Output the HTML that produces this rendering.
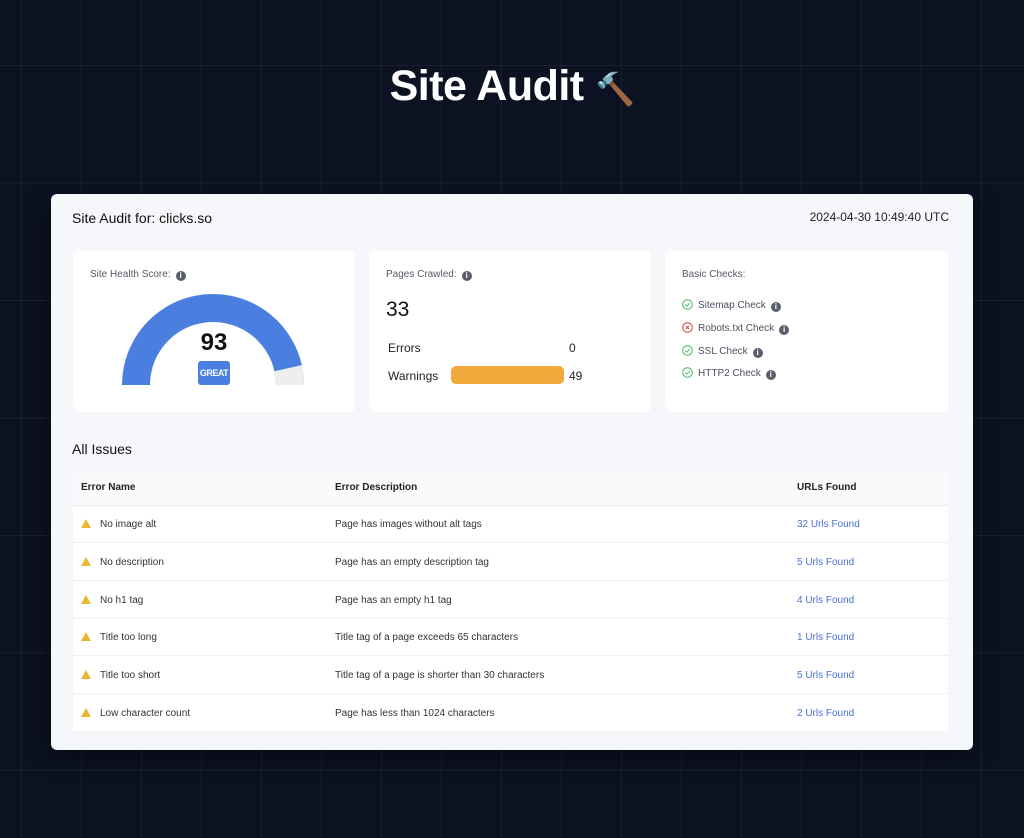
<!DOCTYPE html>
<html><head><meta charset="utf-8"><style>
*{margin:0;padding:0;box-sizing:border-box}
body{width:1024px;height:838px;overflow:hidden;background:#0c1222;font-family:"Liberation Sans",sans-serif;position:relative}
.grid{position:absolute;inset:0;background-image:linear-gradient(90deg,rgba(255,255,255,0.05) 1px,transparent 1px),linear-gradient(0deg,rgba(255,255,255,0.06) 1px,transparent 1px);background-size:60px 100%,100% 117.5px;background-position:21px 0,0 66px}
h1{position:absolute;left:0;width:1024px;top:62px;text-align:center;color:#fff;font-size:43px;font-weight:700;letter-spacing:-0.5px}
.card{position:absolute;left:51px;top:194px;width:922px;height:556px;background:#f5f7fa;border-radius:6px;box-shadow:0 6px 20px rgba(0,0,0,0.5)}
.abs{position:absolute}
.box{position:absolute;top:57px;height:161px;background:#fff;border-radius:6px}
.lbl{font-size:10px;color:#555a64}
.i{display:inline-block;width:10px;height:10px;border-radius:50%;background:#5b5f6b;color:#fff;font-size:8px;font-weight:700;text-align:center;line-height:10px;vertical-align:-1px;margin-left:5px}
.chk{position:absolute;left:17px;font-size:10px;color:#4b5060}
.chk svg{vertical-align:-2px;margin-right:5px}
table{position:absolute;left:22px;top:277px;width:875px;border-collapse:collapse;font-size:10px;color:#333}
th{background:#f9fafb;height:34px;text-align:left;font-weight:700;color:#222;padding-left:8px;border-bottom:1px solid #e6e8ec}
td{background:#fff;height:37.7px;padding-left:8px;padding-top:2px;border-bottom:1px solid #eef0f3}
td a{color:#4a6fd6;text-decoration:none}
.w{display:inline-block;width:0;height:0;border-left:5px solid transparent;border-right:5px solid transparent;border-bottom:9px solid #eab834;vertical-align:-1px;margin-right:9px}
</style></head><body>
<div class="grid"></div>
<h1>Site Audit <span style="font-size:32px">🔨</span></h1>
<div class="card">
 <div class="abs" style="left:21px;top:16px;font-size:14px;color:#111">Site Audit for: clicks.so</div>
 <div class="abs" style="right:24px;top:16px;font-size:12px;color:#222">2024-04-30 10:49:40 UTC</div>

 <div class="box" style="left:22px;width:282px">
  <div class="abs lbl" style="left:17px;top:18px">Site Health Score:<span class="i">i</span></div>
  <svg class="abs" style="left:0;top:0" width="282" height="161">
   <path d="M49 134 A91 91 0 0 1 231 134 L203 134 A63 63 0 0 0 77 134 Z" fill="#4a7fe0"/>
   <path d="M228.8 114.1 A91 91 0 0 1 231 134 L203 134 A63 63 0 0 0 201.5 120.3 Z" fill="#eeeeee"/>
  </svg>
  <div class="abs" style="left:0;width:282px;text-align:center;top:78px;font-size:24px;font-weight:700;color:#111">93</div>
  <div class="abs" style="left:125px;top:110px;width:32px;height:24px;background:#4a7fe0;border-radius:3px;color:#fff;font-size:9px;font-weight:700;text-align:center;line-height:24px;letter-spacing:-0.5px">GREAT</div>
 </div>

 <div class="box" style="left:318px;width:282px">
  <div class="abs lbl" style="left:17px;top:18px">Pages Crawled:<span class="i">i</span></div>
  <div class="abs" style="left:17px;top:47px;font-size:21px;color:#111">33</div>
  <div class="abs" style="left:19px;top:90px;font-size:12px;color:#222">Errors</div>
  <div class="abs" style="left:200px;top:90px;font-size:12px;color:#222">0</div>
  <div class="abs" style="left:19px;top:118px;font-size:12px;color:#222">Warnings</div>
  <div class="abs" style="left:82px;top:115px;width:113px;height:18px;background:#f1a93c;border-radius:5px"></div>
  <div class="abs" style="left:200px;top:118px;font-size:12px;color:#222">49</div>
 </div>

 <div class="box" style="left:614px;width:283px">
  <div class="abs lbl" style="left:17px;top:18px">Basic Checks:</div>
  <div class="chk" style="top:48px"><svg width="11" height="11"><circle cx="5.5" cy="5.5" r="4.8" fill="none" stroke="#4cb860" stroke-width="1"/><path d="M3.2 5.6l1.6 1.6 3-3" fill="none" stroke="#4cb860" stroke-width="1"/></svg>Sitemap Check<span class="i">i</span></div>
  <div class="chk" style="top:71px"><svg width="11" height="11"><circle cx="5.5" cy="5.5" r="4.8" fill="none" stroke="#d9443a" stroke-width="1"/><path d="M4 4l3 3M7 4l-3 3" stroke="#d9443a" stroke-width="1"/></svg>Robots.txt Check<span class="i">i</span></div>
  <div class="chk" style="top:94px"><svg width="11" height="11"><circle cx="5.5" cy="5.5" r="4.8" fill="none" stroke="#4cb860" stroke-width="1"/><path d="M3.2 5.6l1.6 1.6 3-3" fill="none" stroke="#4cb860" stroke-width="1"/></svg>SSL Check<span class="i">i</span></div>
  <div class="chk" style="top:116px"><svg width="11" height="11"><circle cx="5.5" cy="5.5" r="4.8" fill="none" stroke="#4cb860" stroke-width="1"/><path d="M3.2 5.6l1.6 1.6 3-3" fill="none" stroke="#4cb860" stroke-width="1"/></svg>HTTP2 Check<span class="i">i</span></div>
 </div>

 <div class="abs" style="left:21px;top:247px;font-size:14px;color:#111">All Issues</div>
 <table>
  <tr><th style="width:254px">Error Name</th><th style="width:462px">Error Description</th><th>URLs Found</th></tr>
  <tr><td><span class="w"></span>No image alt</td><td>Page has images without alt tags</td><td><a>32 Urls Found</a></td></tr>
  <tr><td><span class="w"></span>No description</td><td>Page has an empty description tag</td><td><a>5 Urls Found</a></td></tr>
  <tr><td><span class="w"></span>No h1 tag</td><td>Page has an empty h1 tag</td><td><a>4 Urls Found</a></td></tr>
  <tr><td><span class="w"></span>Title too long</td><td>Title tag of a page exceeds 65 characters</td><td><a>1 Urls Found</a></td></tr>
  <tr><td><span class="w"></span>Title too short</td><td>Title tag of a page is shorter than 30 characters</td><td><a>5 Urls Found</a></td></tr>
  <tr><td style="border-bottom:none"><span class="w"></span>Low character count</td><td style="border-bottom:none">Page has less than 1024 characters</td><td style="border-bottom:none"><a>2 Urls Found</a></td></tr>
 </table>
</div>
</body></html>
